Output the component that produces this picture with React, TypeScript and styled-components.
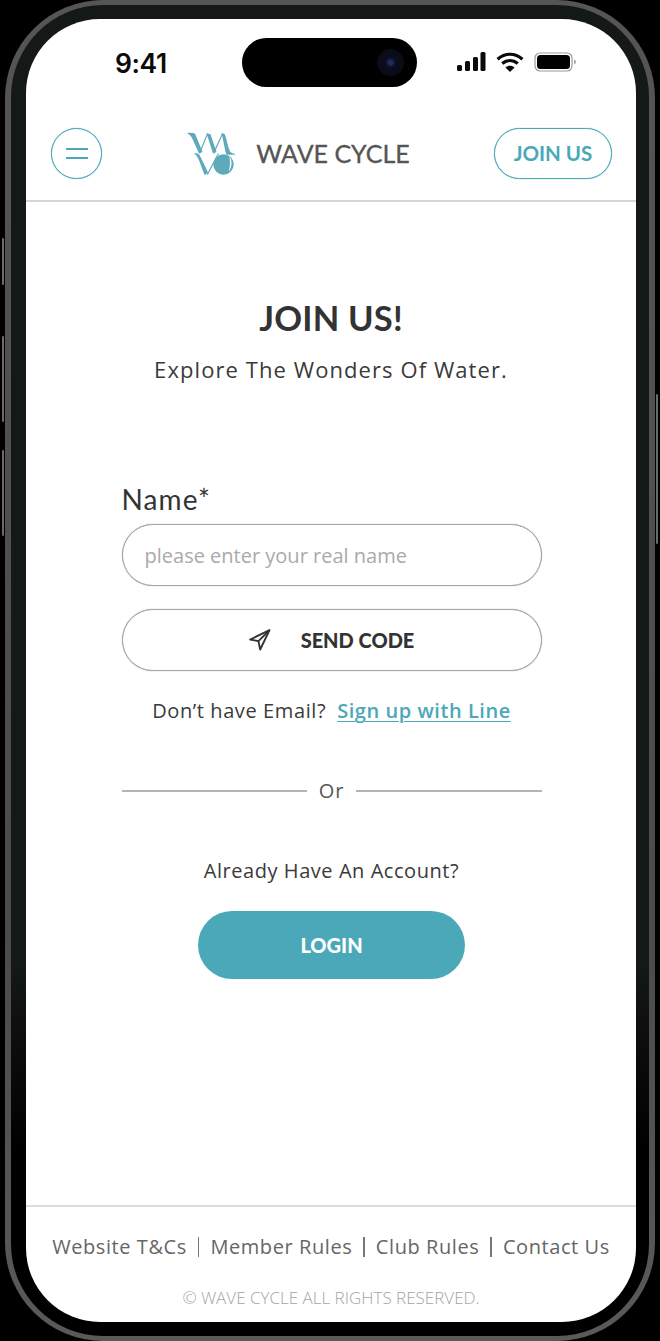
import React from "react";
import styled, { createGlobalStyle } from "styled-components";

const TEAL = "#4aa8b9";
const HEAD = `Lato, "Liberation Sans", sans-serif`;
const BODY = `"Open Sans", "Liberation Sans", sans-serif`;

const Global = createGlobalStyle`
  html, body { margin: 0; padding: 0; background: #000; }
  body { width: 660px; height: 1341px; overflow: hidden; }
  * { box-sizing: border-box; }
`;

const Page = styled.div`
  position: relative;
  width: 660px;
  height: 1341px;
  padding-left: 5px;
  background: #000;
`;

const SideKey = styled.div<{ $top: number; $h: number; $right?: boolean }>`
  position: absolute;
  top: ${(p) => p.$top}px;
  height: ${(p) => p.$h}px;
  width: 2px;
  ${(p) => (p.$right ? "left: 656px;" : "left: 2px;")}
  background: #6a6a6a;
  border-radius: 1px;
`;

const Frame = styled.div`
  width: 650px;
  height: 1341px;
  border-radius: 98px;
  background: linear-gradient(180deg, #555 0%, #4b4b4b 70%, #5a5a5a 100%);
  padding: 5px 6px 5px 6px;
`;

const Bezel = styled.div`
  width: 100%;
  height: 100%;
  border-radius: 92px;
  background: linear-gradient(180deg, #141817 0%, #141817 72%, #000 86%);
  padding: 14px 13px 14px 15px;
`;

const Screen = styled.div`
  position: relative;
  width: 610px;
  height: 1303px;
  background: #fff;
  border-radius: 74px;
  overflow: hidden;
  display: flex;
  flex-direction: column;
`;

const StatusBar = styled.div`
  height: 89px;
  flex: none;
  padding: 0 59px 0 89px;
  display: flex;
  align-items: flex-start;
  justify-content: space-between;
`;

const Clock = styled.div`
  font: 600 26.5px/1 Inter, sans-serif;
  color: #0b0b0b;
  margin-top: 31px;
  letter-spacing: -0.4px;
`;

const StatusIcons = styled.div`
  display: flex;
  align-items: center;
  gap: 10px;
  margin-top: 33px;
`;

const Island = styled.div`
  position: absolute;
  left: 216px;
  top: 19px;
  width: 175px;
  height: 49px;
  border-radius: 25px;
  background: #000;
`;

const Lens = styled.div`
  position: absolute;
  left: 135px;
  top: 11px;
  width: 27px;
  height: 27px;
  border-radius: 50%;
  background: radial-gradient(circle, #1c2a5e 0 2px, #0b0d1c 5px, #0a0a12 100%);
`;

const Header = styled.header`
  height: 94px;
  flex: none;
  padding: 20px 24px 0 25px;
  border-bottom: 2px solid #d6d6d6;
  display: grid;
  grid-template-columns: 51px 1fr 118px;
  align-items: start;
`;

const MenuButton = styled.button`
  width: 51px;
  height: 51px;
  border-radius: 50%;
  border: 1px solid ${TEAL};
  box-shadow: 0 0 1px ${TEAL};
  background: #fff;
  padding: 0;
  display: flex;
  flex-direction: column;
  align-items: center;
  justify-content: center;
  gap: 7px;
`;

const MenuLine = styled.span`
  display: block;
  width: 22px;
  height: 2px;
  background: ${TEAL};
`;

const Brand = styled.div`
  display: flex;
  align-items: center;
  justify-content: center;
  gap: 21px;
  height: 51px;
  padding-left: 1px;
`;

const BrandName = styled.span`
  font: 400 25px/1 ${HEAD};
  color: #555;
  white-space: nowrap;
  letter-spacing: 0;
  -webkit-text-stroke: 0.3px #555;
`;

const JoinButton = styled.button`
  width: 118px;
  height: 51px;
  border-radius: 26px;
  border: 1px solid ${TEAL};
  box-shadow: 0 0 1px ${TEAL};
  background: #fff;
  color: ${TEAL};
  font: 700 20.5px/1 ${HEAD};
  padding: 0;
`;

const Main = styled.main`
  flex: 1;
  display: flex;
  flex-direction: column;
  align-items: center;
  padding-top: 96px;
`;

const Title = styled.h1`
  margin: 0;
  font: 700 34.5px/40px ${HEAD};
  color: #333;
  letter-spacing: 0.2px;
`;

const Subtitle = styled.p`
  margin: 16px 0 0;
  font: 400 22px/30px ${BODY};
  color: #3a3a3a;
  letter-spacing: 1.08px;
`;

const Form = styled.div`
  width: 420px;
  margin-top: 99px;
  margin-left: 1px;
  display: flex;
  flex-direction: column;
`;

const Label = styled.label`
  font: 400 28px/32px ${HEAD};
  color: #333;
  letter-spacing: 1.1px;
`;

const Input = styled.input`
  margin-top: 9px;
  width: 100%;
  height: 62px;
  border-radius: 31px;
  border: 1px solid #a4a4a4;
  box-shadow: 0 0 1px #999;
  background: #fff;
  padding: 0 22px;
  font: 400 20px/1 ${BODY};
  letter-spacing: 0;
  outline: none;
  &::placeholder { color: #aaa; opacity: 1; }
`;

const SendButton = styled.button`
  margin-top: 23px;
  width: 100%;
  height: 62px;
  border-radius: 31px;
  border: 1px solid #a4a4a4;
  box-shadow: 0 0 1px #999;
  background: #fff;
  display: flex;
  align-items: center;
  justify-content: center;
  gap: 30px;
  padding: 0;
  font: 900 20px/1 ${HEAD};
  color: #333;
`;

const AltLine = styled.p`
  margin: 26px 0 0;
  text-align: center;
  font: 400 20px/28px ${BODY};
  color: #3a3a3a;
  letter-spacing: 0.6px;
`;

const AltLink = styled.a`
  margin-left: 11px;
  color: ${TEAL};
  font-weight: 600;
  letter-spacing: 0.55px;
  text-decoration: underline;
  text-decoration-thickness: 1px;
  text-underline-offset: 3px;
`;

const OrRow = styled.div`
  margin-top: 52px;
  display: flex;
  align-items: center;
  gap: 12px;
  font: 400 20px/28px ${BODY};
  color: #555;
  letter-spacing: 0.8px;
`;

const OrRule = styled.span`
  flex: 1;
  height: 2px;
  background: #b4b4b4;
`;

const Prompt = styled.p`
  margin: 52px 0 0;
  text-align: center;
  font: 400 20px/28px ${BODY};
  color: #3a3a3a;
  letter-spacing: 0.55px;
`;

const LoginButton = styled.button`
  margin: 26px auto 0;
  width: 267px;
  height: 68px;
  border: none;
  border-radius: 34px;
  background: ${TEAL};
  color: #fff;
  font: 900 20px/1 ${HEAD};
`;

const Footer = styled.footer`
  flex: none;
  height: 117px;
  border-top: 2px solid #dcdcdc;
  padding-top: 26px;
  display: flex;
  flex-direction: column;
  align-items: center;
`;

const FooterLinks = styled.nav`
  display: flex;
  align-items: center;
  gap: 11px;
  font: 400 20px/28px ${BODY};
  color: #666;
  letter-spacing: 0.58px;
  white-space: nowrap;
`;

const FooterSep = styled.span`
  width: 1.5px;
  height: 20px;
  background: #777;
`;

const Copyright = styled.div`
  margin-top: 25px;
  font: 300 17px/24px ${BODY};
  color: #a4a4a4;
`;

const Signal = () => (
  <svg width="30" height="20" viewBox="0 0 30 20" fill="#0b0b0b">
    <rect x="1" y="13" width="5" height="6" rx="1.5" />
    <rect x="9" y="9" width="5" height="10" rx="1.5" />
    <rect x="17" y="5" width="5" height="14" rx="1.5" />
    <rect x="24.5" y="0" width="5" height="19" rx="1.5" />
  </svg>
);

const Wifi = () => (
  <svg width="28" height="20" viewBox="0 0 28 20" fill="none" stroke="#0b0b0b" strokeWidth="3.2">
    <path d="M1.6 7.2C9 .6 19 .6 26.4 7.2" />
    <path d="M6.2 11.6c4.8-4 10.8-4 15.6 0" />
    <path d="M14 20l-4.6-4.6c2.8-2.2 6.4-2.2 9.2 0z" fill="#0b0b0b" stroke="none" />
  </svg>
);

const Battery = () => (
  <svg width="43" height="20" viewBox="0 0 43 20">
    <rect x="1" y="1" width="37" height="18" rx="5" fill="#fff" stroke="#9a9a9a" strokeWidth="1.2" />
    <rect x="3" y="3" width="33" height="14" rx="3.5" fill="#000" />
    <path d="M40 7.5c1.4.4 2 1.4 2 2.5s-.6 2.1-2 2.5z" fill="#a8a8a8" />
  </svg>
);

const Logo = () => (
  <svg width="48" height="44" viewBox="0 0 48 44" fill="#5eaabb">
    <path d="M0 1.2C2 .6 5.500 .8 8 1.500L15.500 20l-3.500 1.500L4.800 5.500C3.800 3.500 2 2.200 0 1.200z" />
    <path d="M12 21L20 1.500h1.200L13.100 21.500z" />
    <path d="M19.500 1.200c1.500.2 2.800.5 4 1L29.500 20l-3.500 1.500z" />
    <path d="M26 21L35 1.500h1.200L27.200 21.500z" />
    <path d="M34.500 1.200c1.200.1 2.300.4 3.300 1 2 5.300 2.800 11.300 4.800 16.300.8 2 2.400 3 5.400 3.300v1H39.500C37.500 17 36.500 8 34.500 1.200z" />
    <path d="M7 21.500c2.200-.6 4-.2 5.500 1.500 3 5.500 5.500 11 8.500 17.500l-3.200 2.800C14.500 36 12.500 28 10 24.500c-.8-1.200-1.800-2.200-3-3z" />
    <path d="M19.800 42.500L30.800 21.500h1.200L20.900 43z" />
    <circle cx="36.500" cy="32.500" r="10.200" />
    <path d="M42.500 24.500c2.800 4 2.800 10.500-.8 15.500 1.300-5 1.600-10 .8-15.500z" fill="#fff" />
  </svg>
);

const SendGlyph = () => (
  <svg width="22" height="22" viewBox="0 0 22 22" fill="none" stroke="#333" strokeWidth="1.9" strokeLinejoin="round">
    <path d="M20.500 1.200L1.200 10.500l8.200 1.600L11.200 20.500z" />
    <path d="M20.500 1.200L9.400 12.100" />
  </svg>
);

export default function App() {
  return (
    <Page>
      <Global />
      <SideKey $top={238} $h={47} />
      <SideKey $top={336} $h={86} />
      <SideKey $top={450} $h={86} />
      <SideKey $top={394} $h={150} $right />
      <Frame>
        <Bezel>
          <Screen>
            <Island>
              <Lens />
            </Island>
            <StatusBar>
              <Clock>9:41</Clock>
              <StatusIcons>
                <Signal />
                <Wifi />
                <Battery />
              </StatusIcons>
            </StatusBar>
            <Header>
              <MenuButton aria-label="menu">
                <MenuLine />
                <MenuLine />
              </MenuButton>
              <Brand>
                <Logo />
                <BrandName>WAVE CYCLE</BrandName>
              </Brand>
              <JoinButton>JOIN US</JoinButton>
            </Header>
            <Main>
              <Title>JOIN US!</Title>
              <Subtitle>Explore The Wonders Of Water.</Subtitle>
              <Form>
                <Label>Name*</Label>
                <Input placeholder="please enter your real name" />
                <SendButton>
                  <SendGlyph />
                  SEND CODE
                </SendButton>
                <AltLine>
                  Don’t have Email?
                  <AltLink href="#">Sign up with Line</AltLink>
                </AltLine>
                <OrRow>
                  <OrRule />
                  Or
                  <OrRule />
                </OrRow>
                <Prompt>Already Have An Account?</Prompt>
                <LoginButton>LOGIN</LoginButton>
              </Form>
            </Main>
            <Footer>
              <FooterLinks>
                Website T&amp;Cs
                <FooterSep />
                Member Rules
                <FooterSep />
                Club Rules
                <FooterSep />
                Contact Us
              </FooterLinks>
              <Copyright>© WAVE CYCLE ALL RIGHTS RESERVED.</Copyright>
            </Footer>
          </Screen>
        </Bezel>
      </Frame>
    </Page>
  );
}
